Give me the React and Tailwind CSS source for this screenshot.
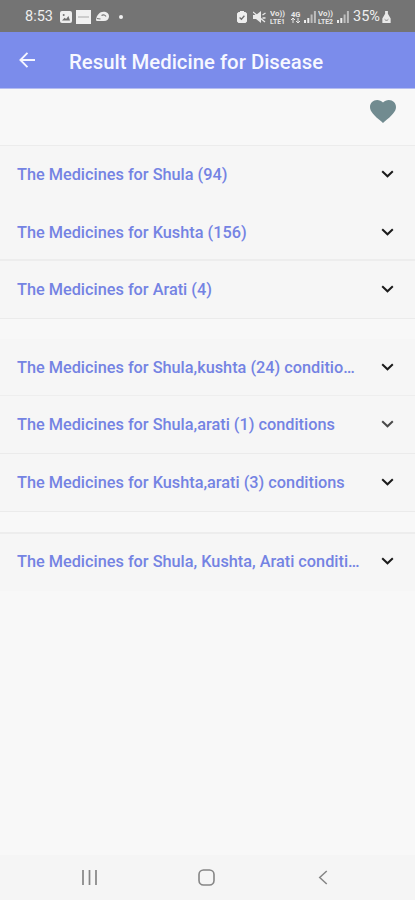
const groups = [
  {
    className: "border-t border-[#ececec]",
    rows: [
      { label: "The Medicines for Shula (94)", className: "h-[57px] pt-px" },
      { label: "The Medicines for Kushta (156)", className: "h-[58px] pt-[3px] border-b-2 border-[#ededed]" },
      { label: "The Medicines for Arati (4)", className: "h-[58px] pt-px border-b border-[#ebebeb]" },
    ],
  },
  {
    className: "mt-5",
    rows: [
      { label: "The Medicines for Shula,kushta (24) conditio…", className: "h-[57px] pt-0.5 border-b border-[#eeeeee]" },
      { label: "The Medicines for Shula,arati (1) conditions", className: "h-[58px] pt-px border-b border-[#ebebeb]", faded: true },
      { label: "The Medicines for Kushta,arati (3) conditions", className: "h-[58px] border-b border-[#ebebeb]" },
    ],
  },
  {
    className: "mt-5 border-t-2 border-[#ededed]",
    rows: [{ label: "The Medicines for Shula, Kushta, Arati conditi…", className: "h-[57px] pb-px" }],
  },
];

function Chevron({ faded }) {
  return (
    <svg
      width="13"
      height="8"
      viewBox="0 0 13 8"
      fill="none"
      stroke={faded ? "#4a4a4a" : "#1b1b1b"}
      strokeWidth="2"
      className="-mt-0.5 shrink-0"
    >
      <path d="M1.2 1.2 6.5 6.3 11.8 1.2" />
    </svg>
  );
}

function Row({ label, className, faded }) {
  return (
    <button className={`flex w-full items-center justify-between pr-[21px] pl-[17px] ${className}`}>
      <span className="text-[16.3px] leading-5 font-medium whitespace-nowrap text-[#7483e3]">{label}</span>
      <Chevron faded={faded} />
    </button>
  );
}

function VoLte({ sim }) {
  return (
    <svg width="16" height="16" viewBox="0 0 16 16" fill="#e6e6e6" fontFamily="Roboto, sans-serif" fontWeight="700">
      <text x="0" y="6.5" fontSize="6.5" textLength="15" lengthAdjust="spacingAndGlyphs">Vo))</text>
      <text x="0" y="14.8" fontSize="6.5" textLength="15" lengthAdjust="spacingAndGlyphs">{`LTE${sim}`}</text>
    </svg>
  );
}

function Signal() {
  return (
    <svg width="12" height="12" viewBox="0 0 12 12">
      <path d="M0 9h2v3H0zM3.3 7h2v5h-2z" fill="#ededed" />
      <path d="M6.6 3.5h2V12h-2zM9.9 0h2v12h-2z" fill="#bdbdbd" />
    </svg>
  );
}

function StatusBar() {
  return (
    <div className="flex h-8 items-center bg-[#747474] pt-px pl-[25px] text-[14.5px] leading-none text-[#eeeeee]">
      <span className="w-[35px] pt-px whitespace-nowrap">8:53</span>
      <svg width="12" height="12" viewBox="0 0 12 12">
        <rect width="12" height="12" rx="2" fill="#eeeeee" />
        <path d="M2 9.5 4.6 6.8l1.5 1.2L8.4 5 10 9.5z" fill="#707070" />
        <circle cx="3.7" cy="4" r="1" fill="#707070" />
      </svg>
      <svg width="15" height="14" viewBox="0 0 15 14" className="ml-1">
        <path d="M0 0h15v14H0z" fill="#f1f1f1" />
        <path d="M2 7h11" stroke="#c0c0c0" strokeWidth="1.5" />
      </svg>
      <svg width="13" height="11" viewBox="0 0 13 11" className="ml-[5px]">
        <path d="M0 8.500C1 4 3.500.800 7.500.800c3.300 0 5.500 2 5.500 4.700S11 10 8 10H1.500C.500 10 0 9.500 0 8.500z" fill="#eeeeee" />
        <path d="M5.500 4.500c2-1.300 3.800-.500 4.500 1M1 7.500l3.500.500" fill="none" stroke="#777" strokeWidth="1.100" />
      </svg>
      <span className="ml-2.5 size-1 rounded-full bg-[#f0f0f0]" />
      <svg width="10" height="12" viewBox="0 0 10 12" className="ml-[114px]">
        <path d="M3 0h4v1h1.500L10 2.500v8L8.500 12h-7L0 10.500v-8L1.500 1H3z" fill="#eeeeee" />
        <path d="m2.600 6.500 1.800 1.700 3-3.400" fill="none" stroke="#707070" strokeWidth="1.300" />
      </svg>
      <svg width="13" height="12" viewBox="0 0 13 12" className="ml-1.5">
        <path d="M0 4h3l5-4v12L3 8H0z" fill="#e9e9e9" />
        <path d="m0 1 12 10M9.500 4l3-2M9.500 7h3" stroke="#e9e9e9" strokeWidth="1.300" />
      </svg>
      <span className="ml-1"><VoLte sim="1" /></span>
      <svg width="11" height="14" viewBox="0 0 11 14" className="ml-1" fill="#e9e9e9" fontFamily="Roboto, sans-serif" fontWeight="700">
        <text x="1" y="7" fontSize="7.500">4G</text>
        <path d="M3 8v5M1 10l2-2 2 2M8 8v5M6 11l2 2 2-2" fill="none" stroke="#e9e9e9" />
      </svg>
      <span className="ml-[3px]"><Signal /></span>
      <span className="ml-0.5"><VoLte sim="2" /></span>
      <span className="ml-[3px]"><Signal /></span>
      <span className="ml-1 w-[29px] pt-px whitespace-nowrap">35%</span>
      <svg width="9" height="12" viewBox="0 0 9 13">
        <path d="M3 0h3v3l3 5v5H0V8l3-5z" fill="#e9e9e9" />
        <path d="M2.500 9c1 1.500 3 1.500 4 0" fill="none" stroke="#777" />
      </svg>
    </div>
  );
}

export default function App() {
  return (
    <div className="flex h-[900px] w-full flex-col overflow-hidden bg-[#f8f8f8] font-['Roboto',sans-serif]">
      <StatusBar />
      <header className="flex h-[57px] items-center border-b border-[#b5bdf1] bg-[#7b8ceb] pl-[19px]">
        <svg width="16" height="16" viewBox="0 0 17 17" fill="none" stroke="#f5f6ff" strokeWidth="2">
          <path d="M17 8.500H1.500M9 1 1.500 8.500 9 16" />
        </svg>
        <h1 className="ml-[34px] pt-[3px] text-[20.35px] leading-6 font-medium whitespace-nowrap text-[#f7f8ff]">
          Result Medicine for Disease
        </h1>
      </header>
      <div className="flex h-14 justify-end bg-[#f8f8f8] pt-[11px] pr-[19px]">
        <svg width="26" height="23" viewBox="2 3 20 18.350" preserveAspectRatio="none" fill="#718b90">
          <path d="M12 21.350l-1.450-1.320C5.400 15.360 2 12.280 2 8.500 2 5.420 4.420 3 7.500 3c1.740 0 3.410.810 4.500 2.090C13.090 3.810 14.760 3 16.500 3 19.580 3 22 5.420 22 8.500c0 3.780-3.400 6.860-8.550 11.540z" />
        </svg>
      </div>
      <main className="flex-1">
        {groups.map((group, index) => (
          <section key={index} className={`bg-[#f6f6f6] ${group.className}`}>
            {group.rows.map((row) => (
              <Row key={row.label} {...row} />
            ))}
          </section>
        ))}
      </main>
      <nav className="flex h-[45px] items-center bg-[#f5f5f5] pb-px pl-[82px]">
        <svg width="15" height="15" viewBox="0 0 15 15" stroke="#858585" strokeWidth="1.700">
          <path d="M1 0v15M7.500 0v15M14 0v15" />
        </svg>
        <svg width="17" height="17" viewBox="0 0 17 17" className="ml-[101px]" fill="none" stroke="#858585" strokeWidth="1.600">
          <rect x="1" y="1" width="15" height="15" rx="4.500" />
        </svg>
        <svg width="10" height="15" viewBox="0 0 10 16" className="ml-[103px]" fill="none" stroke="#858585" strokeWidth="1.600">
          <path d="M9 1 1.500 8 9 15" />
        </svg>
      </nav>
    </div>
  );
}
